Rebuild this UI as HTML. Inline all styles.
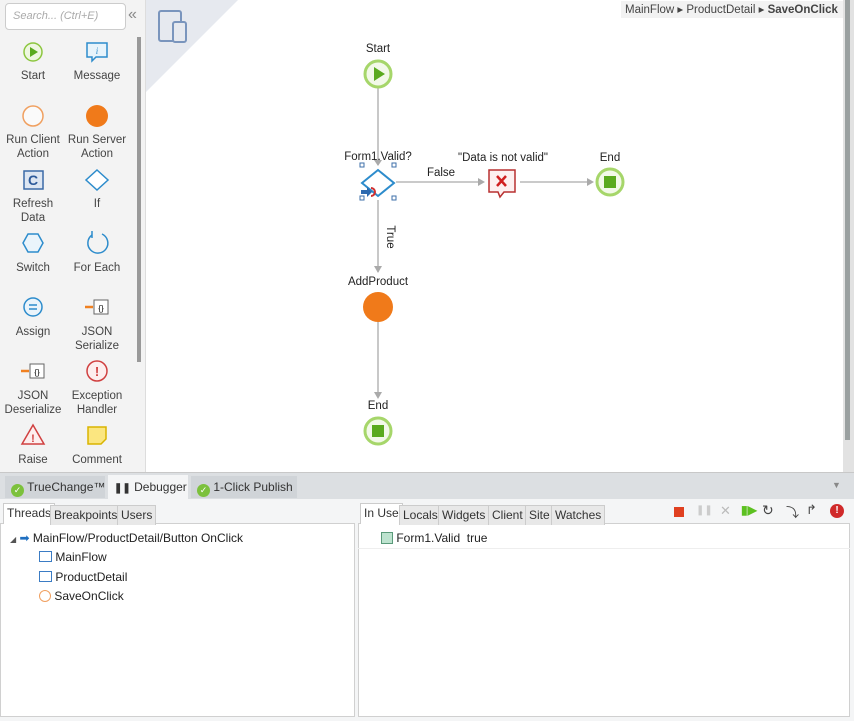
<!DOCTYPE html>
<html><head><meta charset="utf-8"><style>
*{margin:0;padding:0;box-sizing:border-box}
body{width:854px;height:721px;overflow:hidden;background:#fff;font-family:"Liberation Sans",sans-serif;font-size:12px;color:#333;position:relative}
.a{position:absolute;white-space:nowrap}
.lbl{position:absolute;width:64px;text-align:center;font-size:11.5px;color:#444;line-height:14px}
.tab{position:absolute;font-size:12px;padding:2px 3px;border:1px solid #ccc;border-bottom:none;background:#e8e8e8;height:20px;white-space:nowrap}
.chk{display:inline-block;width:13px;height:13px;border-radius:50%;background:#7cc13c;vertical-align:-2px;color:#fff;font-size:9px;text-align:center;line-height:13px}
</style></head><body>
<div class="a" style="left:0;top:0;width:146px;height:472px;background:#f3f3f3;border-right:1px solid #ddd"></div>
<div class="a" style="left:5px;top:3px;width:121px;height:27px;border:1px solid #ccc;border-radius:4px;background:#fff;font-style:italic;color:#aaa;font-size:11px;padding:6px 7px">Search... (Ctrl+E)</div>
<div class="a" style="left:128px;top:6px;color:#888;font-size:16px">«</div>
<div class="a" style="left:137px;top:37px;width:4px;height:325px;background:#999"></div>
<svg class="a" style="left:146px;top:0" width="100" height="92"><polygon points="0,0 92,0 0,92" fill="#e6e9ef"/><rect x="13" y="11" width="22" height="30" rx="2" fill="none" stroke="#7a95bd" stroke-width="2"/><rect x="27" y="22" width="13" height="20" rx="2" fill="#e6e9ef" stroke="#7a95bd" stroke-width="2"/></svg>
<svg class="a" style="left:0;top:0" width="146" height="472">
<circle cx="33" cy="52" r="9" fill="#eef7e0" stroke="#8cc63f" stroke-width="1.5"/><polygon points="30,47 30,57 38,52" fill="#5aaa1e"/>
<path d="M87 43h20v14h-11l-4 4v-4h-5z" fill="#e8f4fb" stroke="#2d8ccc" stroke-width="1.5"/><text x="97" y="54" font-size="9" fill="#2d8ccc" font-style="italic" text-anchor="middle" font-family="Liberation Serif">i</text>
<circle cx="33" cy="116" r="10" fill="#fafafa" stroke="#f0a060" stroke-width="1.5"/>
<circle cx="97" cy="116" r="11" fill="#f07a1a"/>
<rect x="24" y="171" width="19" height="18" fill="#dde6f2" stroke="#3b6aa8" stroke-width="1.5"/><text x="33" y="185" font-size="14" font-weight="bold" fill="#2d5a9a" text-anchor="middle">C</text>
<polygon points="97,170 108,180 97,190 86,180" fill="#fff" stroke="#2d8ccc" stroke-width="1.5"/>
<polygon points="28,234 38,234 43,243 38,252 28,252 23,243" fill="#eaf4fb" stroke="#2d8ccc" stroke-width="1.5"/>
<path d="M92 235 A10 10 0 1 0 102 234" fill="none" stroke="#2d8ccc" stroke-width="1.5"/><path d="M92 231v7" stroke="#2d8ccc" stroke-width="1.5"/>
<circle cx="33" cy="307" r="9" fill="#eaf4fb" stroke="#2d8ccc" stroke-width="1.5"/><path d="M29 305h8M29 309h8" stroke="#2d8ccc" stroke-width="1.5"/>
<rect x="94" y="300" width="14" height="14" fill="#fff" stroke="#666"/><path d="M85 307h8" stroke="#f08020" stroke-width="2.5"/><text x="101" y="311" font-size="8" text-anchor="middle">{}</text>
<rect x="30" y="364" width="14" height="14" fill="#fff" stroke="#666"/><path d="M21 371h8" stroke="#f08020" stroke-width="2.5"/><text x="37" y="375" font-size="8" text-anchor="middle">{}</text>
<circle cx="97" cy="371" r="10" fill="#fdeeee" stroke="#d04040" stroke-width="1.5"/><text x="97" y="376" font-size="13" font-weight="bold" fill="#d04040" text-anchor="middle">!</text>
<polygon points="33,425 44,444 22,444" fill="#fdeeee" stroke="#d04040" stroke-width="1.5"/><text x="33" y="442" font-size="11" font-weight="bold" fill="#d04040" text-anchor="middle">!</text>
<path d="M88 427h18v12l-5 5h-13z" fill="#fbe680" stroke="#d9b400" stroke-width="1.5"/>
</svg>
<div class="lbl" style="left:1px;top:69px">Start</div><div class="lbl" style="left:65px;top:69px">Message</div>
<div class="lbl" style="left:1px;top:133px">Run Client Action</div><div class="lbl" style="left:65px;top:133px">Run Server Action</div>
<div class="lbl" style="left:1px;top:197px">Refresh Data</div><div class="lbl" style="left:65px;top:197px">If</div>
<div class="lbl" style="left:1px;top:261px">Switch</div><div class="lbl" style="left:65px;top:261px">For Each</div>
<div class="lbl" style="left:1px;top:325px">Assign</div><div class="lbl" style="left:65px;top:325px">JSON Serialize</div>
<div class="lbl" style="left:-2px;top:389px;width:70px">JSON Deserialize</div><div class="lbl" style="left:65px;top:389px">Exception Handler</div>
<div class="lbl" style="left:1px;top:453px">Raise</div><div class="lbl" style="left:65px;top:453px">Comment</div>
<div class="a" style="left:621px;top:1px;width:222px;height:17px;background:#f2f2f2;font-size:11.5px;color:#444;padding:1px 4px">MainFlow ▸ ProductDetail ▸ <b>SaveOnClick</b></div>
<div class="a" style="left:843px;top:0;width:11px;height:472px;background:#e2e2e2"></div>
<div class="a" style="left:845px;top:0;width:5px;height:440px;background:#9aa0a0"></div>
<svg class="a" style="left:146px;top:0" width="700" height="472" font-family="Liberation Sans" font-size="11.5">
<g stroke="#aaa" stroke-width="1.3" fill="#aaa">
<line x1="232" y1="88" x2="232" y2="165"/><polygon points="228,160 236,160 232,166" stroke="none"/>
<line x1="250" y1="182" x2="336" y2="182"/><polygon points="332,178 332,186 339,182" stroke="none"/>
<line x1="374" y1="182" x2="446" y2="182"/><polygon points="441,178 441,186 448,182" stroke="none"/>
<line x1="232" y1="200" x2="232" y2="272"/><polygon points="228,266 236,266 232,273" stroke="none"/>
<line x1="232" y1="322" x2="232" y2="397"/><polygon points="228,392 236,392 232,399" stroke="none"/>
</g>
<text x="232" y="52" text-anchor="middle" fill="#222">Start</text>
<circle cx="232" cy="74" r="13" fill="#f2f9e8" stroke="#a6d66a" stroke-width="3"/><polygon points="228,67 228,81 239,74" fill="#5aaa1e"/>
<text x="232" y="160" text-anchor="middle" fill="#222">Form1.Valid?</text>
<polygon points="232,170 248,183 232,196 216,183" fill="#fff" stroke="#2d8ccc" stroke-width="2"/>
<g fill="#fff" stroke="#3d6fa8" stroke-width="1"><rect x="214" y="163" width="4" height="4"/><rect x="246" y="163" width="4" height="4"/><rect x="214" y="196" width="4" height="4"/><rect x="246" y="196" width="4" height="4"/></g>
<path d="M215 190h6v-3l5 5-5 5v-3h-6z" fill="#2d6ab0"/><path d="M225 188a4 4 0 0 1 0 8" fill="none" stroke="#d03030" stroke-width="2"/>
<text x="295" y="176" text-anchor="middle" fill="#222">False</text>
<text x="357" y="161" text-anchor="middle" fill="#222">"Data is not valid"</text>
<path d="M343 170h26v22h-11l-4 5-2-5h-9z" fill="#fdf0f0" stroke="#b83030" stroke-width="1.5"/>
<path d="M351 176l9 10M360 176l-9 10" stroke="#d02020" stroke-width="2.5"/>
<text x="464" y="161" text-anchor="middle" fill="#222">End</text>
<circle cx="464" cy="182" r="13" fill="#f2f9e8" stroke="#a6d66a" stroke-width="3"/><rect x="458" y="176" width="12" height="12" fill="#5aaa1e"/>
<text x="241" y="237" fill="#222" transform="rotate(90 241 237)" text-anchor="middle">True</text>
<text x="232" y="285" text-anchor="middle" fill="#222">AddProduct</text>
<circle cx="232" cy="307" r="15" fill="#f07a1a"/>
<text x="232" y="409" text-anchor="middle" fill="#222">End</text>
<circle cx="232" cy="431" r="13" fill="#f2f9e8" stroke="#a6d66a" stroke-width="3"/><rect x="226" y="425" width="12" height="12" fill="#5aaa1e"/>
</svg>
<div class="a" style="left:0;top:472px;width:854px;height:249px;background:#dcdfe2"></div>
<div class="a" style="left:0;top:472px;width:854px;height:1px;background:#c8c8c8"></div>
<div class="a" style="left:5px;top:476px;width:100px;height:22px;background:#d0d4d8;font-size:12px;padding:4px 6px"><span class="chk">✓</span> TrueChange™</div>
<div class="a" style="left:108px;top:475px;width:80px;height:24px;background:#f4f5f6;font-size:12px;padding:5px 6px"><b style="font-size:10px">❚❚</b> Debugger</div>
<div class="a" style="left:191px;top:476px;width:106px;height:22px;background:#d0d4d8;font-size:12px;padding:4px 6px"><span class="chk">✓</span> 1-Click Publish</div>
<div class="a" style="left:832px;top:480px;font-size:9px;color:#888">▼</div>
<div class="a" style="left:0;top:499px;width:854px;height:222px;background:#f4f5f6"></div>
<div class="a" style="left:0;top:523px;width:355px;height:194px;background:#fff;border:1px solid #d0d0d0"></div>
<div class="a" style="left:358px;top:523px;width:492px;height:194px;background:#fff;border:1px solid #d0d0d0"></div>
<div class="a" style="left:358px;top:548px;width:492px;height:1px;background:#eee"></div>
<div class="tab" style="left:3px;top:503px;background:#fff;height:21px">Threads</div>
<div class="tab" style="left:50px;top:505px">Breakpoints</div>
<div class="tab" style="left:117px;top:505px">Users</div>
<div class="tab" style="left:360px;top:503px;background:#fff;height:21px">In Use</div>
<div class="tab" style="left:399px;top:505px">Locals</div><div class="tab" style="left:438px;top:505px">Widgets</div><div class="tab" style="left:488px;top:505px">Client</div><div class="tab" style="left:525px;top:505px">Site</div><div class="tab" style="left:551px;top:505px">Watches</div>
<div class="a" style="left:674px;top:507px;width:10px;height:10px;background:#e04020"></div>
<div class="a" style="left:696px;top:505px;color:#ccc;font-size:10px">❚❚</div>
<div class="a" style="left:720px;top:503px;color:#bbb;font-size:13px">✕</div>
<div class="a" style="left:741px;top:503px;color:#5cc020;font-size:12px;font-weight:bold">▮▶</div>
<div class="a" style="left:762px;top:502px;color:#444;font-size:14px">↻</div>
<div class="a" style="left:786px;top:502px;color:#444;font-size:13px">⤵</div>
<div class="a" style="left:806px;top:502px;color:#444;font-size:13px">↱</div>
<div class="a" style="left:830px;top:504px;width:14px;height:14px;border-radius:50%;background:#d02a2a;color:#fff;font-size:10px;font-weight:bold;text-align:center;line-height:14px">!</div>
<div class="a" style="left:10px;top:531px;font-size:12px;color:#222"><span style="font-size:8px;color:#555">◢</span> <span style="color:#1f6fc0">➡</span> MainFlow/ProductDetail/Button OnClick</div>
<div class="a" style="left:39px;top:550px;font-size:12px;color:#222"><span style="display:inline-block;width:13px;height:11px;border:1.5px solid #3b7cc4;vertical-align:-1px"></span> MainFlow</div>
<div class="a" style="left:39px;top:570px;font-size:12px;color:#222"><span style="display:inline-block;width:13px;height:11px;border:1.5px solid #3b7cc4;vertical-align:-1px"></span> ProductDetail</div>
<div class="a" style="left:39px;top:589px;font-size:12px;color:#222"><span style="display:inline-block;width:12px;height:12px;border:1.5px solid #f0a060;border-radius:50%;vertical-align:-2px"></span> SaveOnClick</div>
<div class="a" style="left:381px;top:531px;font-size:12px;color:#222"><span style="display:inline-block;width:12px;height:12px;border:1px solid #5a9a7a;background:#bde3cf;vertical-align:-2px"></span> Form1.Valid &nbsp;true</div>
</body></html>
